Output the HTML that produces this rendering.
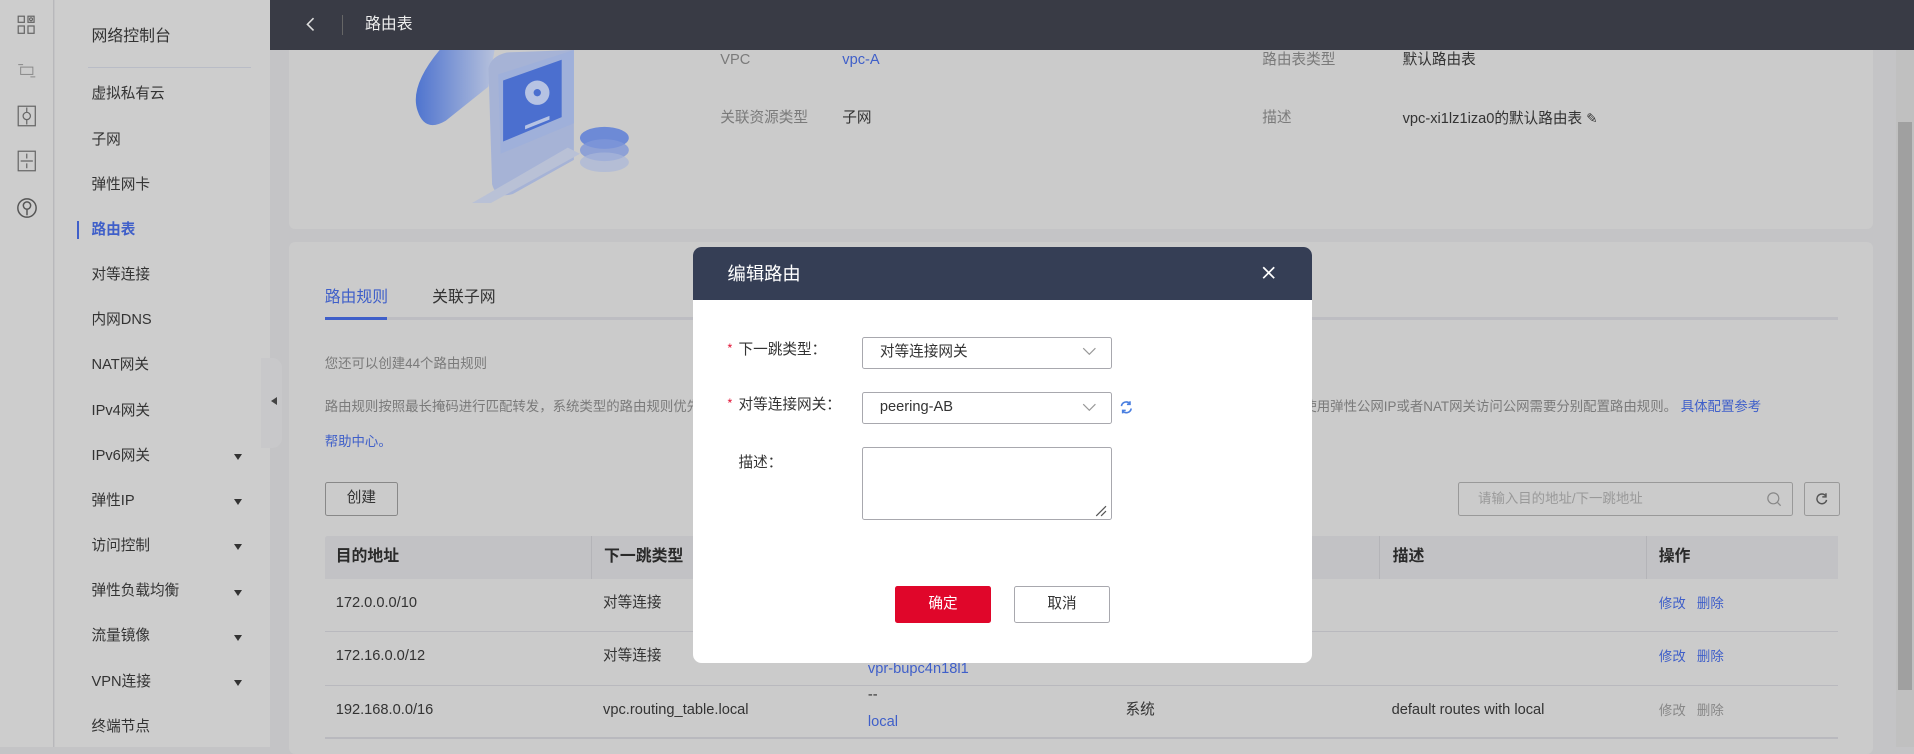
<!DOCTYPE html>
<html><head><meta charset="utf-8"><style>
*{box-sizing:border-box;margin:0;padding:0}
html,body{width:1914px;height:744px;overflow:hidden;background:#c4c4c6}
#w{position:absolute;left:0;top:0;width:1568px;height:612px;zoom:1.2207;font-family:"Liberation Sans","Noto Sans CJK SC",sans-serif;font-size:12px;color:#333}
.a{position:absolute;white-space:nowrap;line-height:16px}
.nav .a{left:75px;font-size:12px;color:#333}
.arr{position:absolute;left:192px;width:0;height:0;border-left:4px solid transparent;border-right:4px solid transparent;border-top:5px solid #333}
.lbl{color:#7a7a7a}
.blue{color:#3f5fc9}
.th{position:absolute;top:439px;height:35px;background:#c2c2c5;font-size:13px;font-weight:bold;color:#2a2a2a;line-height:35px}
.rl{position:absolute;left:266px;width:1240px;height:1px;background:#b9b9be}
</style></head><body><div id="w">
<div class="a" style="left:0;top:0;width:44px;height:612px;background:#cdcdcd;border-right:1px solid #b8b8bb"></div>
<svg class="a" style="left:14px;top:12px" width="16" height="16" viewBox="0 0 16 16" fill="none" stroke="#666" stroke-width="1"><rect x="1" y="1" width="5" height="5"/><rect x="1" y="9" width="5" height="6"/><rect x="9" y="9" width="5" height="6"/><rect x="9" y="1" width="5" height="5"/><circle cx="11.5" cy="3.5" r="1.2"/></svg>
<svg class="a" style="left:14px;top:50px" width="16" height="16" viewBox="0 0 16 16" fill="none" stroke="#888" stroke-width=".8"><rect x="3" y="5" width="10" height="6"/><path d="M1 3h4M11 13h4"/></svg>
<svg class="a" style="left:14px;top:86px" width="16" height="18" viewBox="0 0 16 18" fill="none" stroke="#666" stroke-width="1"><rect x="1" y="1" width="14" height="16"/><circle cx="8" cy="9" r="3"/><path d="M8 2v4M8 12v4"/></svg>
<svg class="a" style="left:14px;top:123px" width="16" height="18" viewBox="0 0 16 18" fill="none" stroke="#666" stroke-width="1"><rect x="1" y="1" width="14" height="16"/><path d="M3 9h10M8 3v4M8 11v4"/></svg>
<svg class="a" style="left:13px;top:161px" width="18" height="18" viewBox="0 0 18 18" fill="none" stroke="#555" stroke-width="1.2"><circle cx="9" cy="9" r="7.5"/><circle cx="9" cy="7" r="3"/><path d="M9 10v5"/></svg>
<div class="nav">
<div class="a" style="left:45px;top:0;width:176px;height:612px;background:#cdcdcd"></div>
<div class="a" style="left:75px;top:22px;font-size:13px;color:#333">网络控制台</div>
<div class="a" style="left:72px;top:55px;width:134px;height:1px;background:#b9bcc6"></div>
<div class="a" style="top:70px">虚拟私有云</div>
<div class="a" style="top:107px">子网</div>
<div class="a" style="top:144px">弹性网卡</div>
<div class="a" style="left:63px;top:181px;width:2px;height:15px;background:#3f5fc9"></div>
<div class="a" style="top:181px;color:#3f5fc9;font-weight:bold">路由表</div>
<div class="a" style="top:218px">对等连接</div>
<div class="a" style="top:255px">内网DNS</div>
<div class="a" style="top:292px">NAT网关</div>
<div class="a" style="top:329px">IPv4网关</div>
<div class="a" style="top:366px">IPv6网关</div><div class="arr" style="top:372px"></div>
<div class="a" style="top:403px">弹性IP</div><div class="arr" style="top:409px"></div>
<div class="a" style="top:440px">访问控制</div><div class="arr" style="top:446px"></div>
<div class="a" style="top:477px">弹性负载均衡</div><div class="arr" style="top:483px"></div>
<div class="a" style="top:514px">流量镜像</div><div class="arr" style="top:520px"></div>
<div class="a" style="top:551px">VPN连接</div><div class="arr" style="top:557px"></div>
<div class="a" style="top:588px">终端节点</div>
</div>
<div class="a" style="left:214px;top:293px;width:17px;height:74px;background:#c8c8ca;border-radius:0 8px 8px 0"></div>
<div class="a" style="left:222px;top:325px;width:0;height:0;border-top:4px solid transparent;border-bottom:4px solid transparent;border-right:5px solid #444"></div>
<div class="a" style="left:221px;top:0;width:1347px;height:41px;background:#393b45"></div>
<svg class="a" style="left:250px;top:14px" width="10" height="12" viewBox="0 0 10 12"><path d="M7 1L2 6l5 5" fill="none" stroke="#ddd" stroke-width="1.3"/></svg>
<div class="a" style="left:280px;top:12px;width:1px;height:17px;background:#666"></div>
<div class="a" style="left:299px;top:12px;font-size:13px;color:#eee">路由表</div>
<div class="a" style="left:237px;top:41px;width:1297px;height:147px;background:#cbcbcb;border-radius:0 0 5px 5px"></div>
<svg class="a" style="left:330px;top:41px" width="200" height="125" viewBox="0 0 200 125">
<defs><linearGradient id="g1" x1="0" y1="0" x2="1" y2="0"><stop offset="0" stop-color="#4f74cf"/><stop offset="1" stop-color="#b6c1dc"/></linearGradient></defs>
<path d="M30 0 Q5 30 12 50 Q18 68 35 58 L70 30 L75 0Z" fill="url(#g1)"/>
<path d="M70 15 Q72 5 85 2 L140 0 L140 90 L90 118 Q76 122 73 110Z" fill="#a6b3d6"/>
<path d="M78 20 L140 0 L140 60 L80 85Z" fill="#9fb0da"/>
<path d="M82 25 L130 8 L130 55 L82 75Z" fill="#4b6fcf"/>
<circle cx="110" cy="35" r="10" fill="#b6c3e3"/><circle cx="110" cy="35" r="3" fill="#4b6fcf"/>
<path d="M100 62l20-8v3l-20 8z" fill="#b6c3e3"/>
<path d="M52 128 L135 80 L145 85 L60 132Z" fill="#b9c1d6"/>
<ellipse cx="165" cy="72" rx="20" ry="9" fill="#6d8ad6"/><ellipse cx="165" cy="82" rx="20" ry="9" fill="#7e96d8" opacity=".8"/><ellipse cx="165" cy="92" rx="20" ry="8" fill="#aab6d8" opacity=".7"/>
</svg>
<div class="a lbl" style="left:590px;top:42px">VPC</div>
<div class="a blue" style="left:690px;top:42px">vpc-A</div>
<div class="a lbl" style="left:1034px;top:42px">路由表类型</div>
<div class="a" style="left:1149px;top:42px">默认路由表</div>
<div class="a lbl" style="left:590px;top:89px">关联资源类型</div>
<div class="a" style="left:690px;top:89px">子网</div>
<div class="a lbl" style="left:1034px;top:89px">描述</div>
<div class="a" style="left:1149px;top:89px">vpc-xi1lz1iza0的默认路由表 <span style="font-size:11px">✎</span></div>
<div class="a" style="left:1553px;top:41px;width:15px;height:571px;background:#c0c0c0"></div>
<div class="a" style="left:1555px;top:100px;width:11px;height:465px;background:#a0a0a0"></div>
<div class="a" style="left:237px;top:198px;width:1297px;height:420px;background:#cbcbcb;border-radius:5px"></div>
<div class="a blue" style="left:266px;top:236px;font-size:13px">路由规则</div>
<div class="a" style="left:354px;top:236px;font-size:13px">关联子网</div>
<div class="a" style="left:266px;top:260px;width:1240px;height:2px;background:#bdbdc2"></div>
<div class="a" style="left:266px;top:260px;width:51px;height:2px;background:#3f5fc9"></div>
<div class="a lbl" style="left:266px;top:290px;font-size:11px">您还可以创建44个路由规则</div>
<div class="a lbl" style="left:266px;top:325px;font-size:11px">路由规则按照最长掩码进行匹配转发，系统类型的路由规则优先级最高……………………………………………………………………………………………………由规则。使用弹性公网IP或者NAT网关访问公网需要分别配置路由规则。 <span class="blue">具体配置参考</span></div>
<div class="a blue" style="left:266px;top:354px;font-size:11px">帮助中心。</div>
<div class="a" style="left:266px;top:395px;width:60px;height:28px;border:1px solid #888;border-radius:2px;text-align:center;line-height:26px">创建</div>
<div class="a" style="left:1194px;top:395px;width:275px;height:28px;border:1px solid #999;border-radius:2px;color:#999;font-size:11px;line-height:26px;padding-left:16px">请输入目的地址/下一跳地址</div>
<svg class="a" style="left:1447px;top:402px" width="13" height="13" viewBox="0 0 13 13" fill="none" stroke="#888"><circle cx="6" cy="6" r="4.5"/><path d="M9.5 9.5l2.5 2.5"/></svg>
<div class="a" style="left:1478px;top:395px;width:29px;height:28px;border:1px solid #999;border-radius:2px"></div>
<svg class="a" style="left:1487px;top:403px" width="11" height="11" viewBox="0 0 11 11" fill="none" stroke="#555" stroke-width="1.2"><path d="M9 3.5A4 4 0 1 0 9.5 6.5"/><path d="M9 1v3H6"/></svg>
<div class="th" style="left:266px;width:218px;padding-left:9px;border-radius:2px 0 0 0">目的地址</div>
<div class="th" style="left:484px;width:646px;padding-left:10px;border-left:1px solid #b4b4b8">下一跳类型</div>
<div class="th" style="left:1130px;width:218px;padding-left:10px;border-left:1px solid #b4b4b8">描述</div>
<div class="th" style="left:1348px;width:158px;padding-left:10px;border-left:1px solid #b4b4b8">操作</div>
<div class="a" style="left:275px;top:487px">172.0.0.0/10</div><div class="a" style="left:494px;top:487px">对等连接</div>
<div class="a blue" style="left:1359px;top:487px;font-size:11px">修改 &nbsp; 删除</div>
<div class="rl" style="top:517px"></div>
<div class="a" style="left:275px;top:530px">172.16.0.0/12</div><div class="a" style="left:494px;top:530px">对等连接</div>
<div class="a blue" style="left:711px;top:541px">vpr-bupc4n18l1</div>
<div class="a" style="left:922px;top:530px">内置…</div>
<div class="a blue" style="left:1359px;top:530px;font-size:11px">修改 &nbsp; 删除</div>
<div class="rl" style="top:561px"></div>
<div class="a" style="left:275px;top:574px">192.168.0.0/16</div><div class="a" style="left:494px;top:574px">vpc.routing_table.local</div>
<div class="a" style="left:711px;top:562px">--</div><div class="a blue" style="left:711px;top:584px">local</div>
<div class="a" style="left:922px;top:574px">系统</div>
<div class="a" style="left:1140px;top:574px">default routes with local</div>
<div class="a" style="left:1359px;top:574px;font-size:11px;color:#888">修改 &nbsp; 删除</div>
<div class="rl" style="top:604px"></div>
<div class="a" style="left:568px;top:202px;width:507px;height:341px;background:#fff;border-radius:7px;overflow:hidden">
<div style="height:44px;background:#353e55"></div></div>
<div class="a" style="left:596px;top:216px;font-size:15px;color:#fff">编辑路由</div>
<svg class="a" style="left:1034px;top:218px" width="11" height="11" viewBox="0 0 11 11"><path d="M1 1l9 9M10 1l-9 9" stroke="#fff" stroke-width="1.4"/></svg>
<div class="a" style="left:596px;top:278px;color:#e0062a;font-size:10px">*</div>
<div class="a" style="left:605px;top:279px;color:#333">下一跳类型：</div>
<div class="a" style="left:706px;top:276px;width:205px;height:26px;border:1px solid #a8a8ae;border-radius:2px;line-height:24px;padding-left:14px">对等连接网关</div>
<svg class="a" style="left:886px;top:284px" width="12" height="8" viewBox="0 0 12 8"><path d="M1 1l5 5 5-5" fill="none" stroke="#999"/></svg>
<div class="a" style="left:596px;top:323px;color:#e0062a;font-size:10px">*</div>
<div class="a" style="left:605px;top:324px;color:#333">对等连接网关：</div>
<div class="a" style="left:706px;top:321px;width:205px;height:26px;border:1px solid #a8a8ae;border-radius:2px;line-height:24px;padding-left:14px">peering-AB</div>
<svg class="a" style="left:886px;top:330px" width="12" height="8" viewBox="0 0 12 8"><path d="M1 1l5 5 5-5" fill="none" stroke="#999"/></svg>
<svg class="a" style="left:917px;top:328px" width="12" height="12" viewBox="0 0 12 12" fill="none" stroke="#4a7fe0" stroke-width="1.3"><path d="M2 5a4 4 0 0 1 7-2M10 7a4 4 0 0 1-7 2"/><path d="M9 1v2.5H6.5M3 11V8.5h2.5"/></svg>
<div class="a" style="left:605px;top:372px;color:#333">描述：</div>
<div class="a" style="left:706px;top:366px;width:205px;height:60px;border:1px solid #a8a8ae;border-radius:2px"></div>
<svg class="a" style="left:897px;top:414px" width="10" height="10" viewBox="0 0 10 10"><path d="M1 9l8-8M5 9l4-4" stroke="#555"/></svg>
<div class="a" style="left:733px;top:480px;width:79px;height:30px;background:#e0062a;border-radius:2px;color:#fff;text-align:center;line-height:30px">确定</div>
<div class="a" style="left:831px;top:480px;width:78px;height:30px;border:1px solid #a8a8ae;border-radius:2px;text-align:center;line-height:28px">取消</div>
</div></body></html>
